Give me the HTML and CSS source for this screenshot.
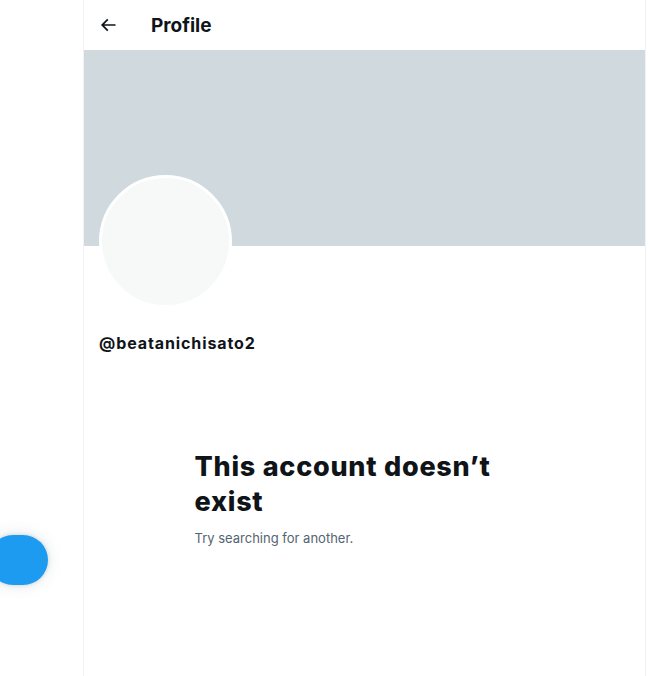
FILE: index.html
```html
<!DOCTYPE html>
<html lang="en">
<head>
    <meta charset="UTF-8">
    <meta name="viewport" content="width=device-width, initial-scale=1.0">
    <title>Profile</title>
    <link rel="stylesheet" href="styles.css">
</head>
<body>
    <nav class="sidebar">
        <div class="post-button"></div>
    </nav>
    <main class="column">
        <header class="top-bar">
            <button class="back-button" aria-label="Back">
                <svg viewBox="0 0 24 24" width="20" height="20"><path d="M7.414 13l5.043 5.04-1.414 1.42L3.586 12l7.457-7.46 1.414 1.42L7.414 11H21v2H7.414z"></path></svg>
            </button>
            <h2 class="top-title">Profile</h2>
        </header>
        <div class="banner"></div>
        <section class="profile">
            <div class="avatar"></div>
            <div class="handle">@beatanichisato2</div>
        </section>
        <div class="empty-state">
            <h1 class="empty-title">This account doesn’t exist</h1>
            <p class="empty-text">Try searching for another.</p>
        </div>
    </main>
</body>
</html>
```

FILE: styles.css
```css
body {
    font-family: "Inter", "Roboto", "Liberation Sans", sans-serif;
    margin: 0;
    padding: 0;
    background-color: #fff;
    color: #0f1419;
    display: flex;
    min-height: 676px;
}
.sidebar {
    width: 83px;
    flex-shrink: 0;
    padding-top: 535px;
    box-sizing: border-box;
}
.post-button {
    width: 60px;
    height: 50px;
    margin-left: -12px;
    background-color: #1d9bf0;
    border-radius: 25px;
    box-shadow: 0 0 15px rgba(101,119,134,0.2), 0 0 3px 1px rgba(101,119,134,0.15);
}
.column {
    width: 561px;
    border-left: 1px solid #eff3f4;
    border-right: 1px solid #eff3f4;
    flex-shrink: 0;
}
.top-bar {
    height: 50px;
    display: flex;
    align-items: center;
    padding: 0 14px;
}
.back-button {
    background: none;
    border: none;
    padding: 0;
    width: 20px;
    height: 20px;
    margin-right: 33px;
    cursor: pointer;
}
.back-button svg {
    fill: #0f1419;
    display: block;
}
.top-title {
    margin: 0;
    font-size: 19px;
    font-weight: 700;
}
.banner {
    height: 196px;
    background-color: #cfd9de;
}
.profile {
    padding: 0 15px;
}
.avatar {
    width: 127px;
    height: 127px;
    margin-top: -71px;
    border-radius: 50%;
    border: 3px solid #fff;
    background-color: #f7f9f9;
}
.handle {
    margin-top: 25px;
    font-size: 16px;
    font-weight: 700;
    line-height: 20px;
    letter-spacing: 0.9px;
}
.empty-state {
    width: 340px;
    margin: 96px auto 0;
}
.empty-title {
    margin: 0;
    font-size: 27px;
    font-weight: 800;
    line-height: 35px;
    letter-spacing: 0.75px;
}
.empty-text {
    margin: 9px 0 0;
    font-size: 13px;
    color: #536471;
    line-height: 20px;
}
```
